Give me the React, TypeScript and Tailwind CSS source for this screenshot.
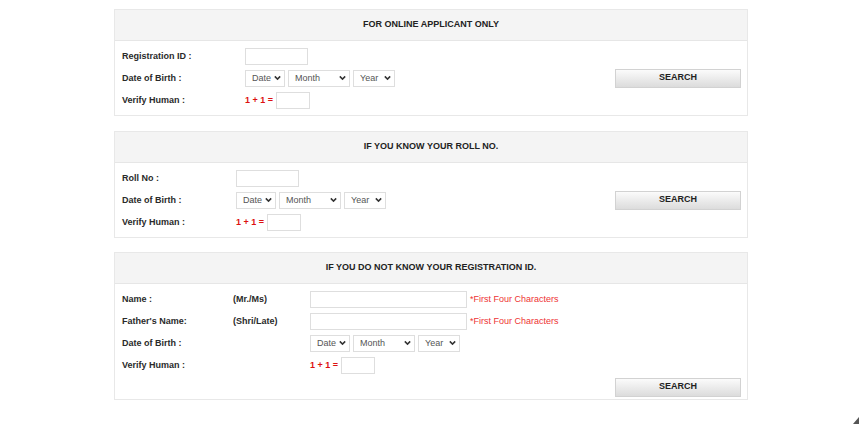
import React from 'react';

const font = { fontFamily: '"Liberation Sans", Arial, sans-serif' };

function Chevron() {
  return (
    <svg width="7" height="5" viewBox="0 0 7 5" className="pointer-events-none absolute right-[4px] top-1/2 -translate-y-1/2">
      <path d="M0.8 0.9 L3.5 3.6 L6.2 0.9" fill="none" stroke="#333" strokeWidth="1.5" />
    </svg>
  );
}

function Select({ label, width }: { label: string; width: string }) {
  return (
    <div className={`relative h-[17px] ${width}`}>
      <select
        defaultValue=""
        className="block h-full w-full appearance-none border border-[#dedede] bg-white pl-[6px] pr-[12px] text-[9px] leading-none text-[#555] outline-none"
        style={font}
      >
        <option value="">{label}</option>
      </select>
      <Chevron />
    </div>
  );
}

function DobSelects() {
  return (
    <div className="flex items-center gap-[3px]">
      <Select label="Date" width="w-[40px]" />
      <Select label="Month" width="w-[62px]" />
      <Select label="Year" width="w-[42px]" />
    </div>
  );
}

function TextBox({ width }: { width: string }) {
  return <input type="text" className={`block h-[17px] ${width} border border-[#dedede] bg-white outline-none`} />;
}

function Captcha() {
  return (
    <div className="flex items-center gap-[3px]">
      <span className="pt-[1px] text-[9px] font-bold text-[#d11]">1 + 1 =</span>
      <TextBox width="w-[34px]" />
    </div>
  );
}

function SearchButton() {
  return (
    <button
      type="button"
      className="block h-[19px] w-[126px] border border-[#d2d2d2] bg-gradient-to-b from-[#fbfbfb] to-[#dcdcdc] text-[9px] font-bold text-[#222]"
      style={font}
    >
      SEARCH
    </button>
  );
}

function Panel({ title, className, children }: { title: string; className?: string; children: React.ReactNode }) {
  return (
    <div className={`border border-[#e8e8e8] bg-white ${className ?? ''}`}>
      <div className="flex h-[31px] items-center justify-center border-b border-[#e6e6e6] bg-[#f4f4f4] text-[9px] font-bold text-[#222]">
        {title}
      </div>
      {children}
    </div>
  );
}

function Row({ label, labelWidth, children }: { label: string; labelWidth: string; children: React.ReactNode }) {
  return (
    <div className="flex h-[22px] items-center">
      <div className={`${labelWidth} pt-[2px] text-[9px] font-bold text-[#2a2a2a]`}>{label}</div>
      {children}
    </div>
  );
}

export default function App() {
  return (
    <div className="relative h-[430px] w-full bg-white" style={font}>
      <div className="ml-[114px] flex w-[634px] flex-col pt-[9px]">
        <Panel title="FOR ONLINE APPLICANT ONLY">
          <div className="flex items-center pl-[7px] pr-[6px] pt-[4px] pb-[4px]">
            <div className="flex-1">
              <Row label="Registration ID :" labelWidth="w-[123px]">
                <TextBox width="w-[63px]" />
              </Row>
              <Row label="Date of Birth :" labelWidth="w-[123px]">
                <DobSelects />
              </Row>
              <Row label="Verify Human :" labelWidth="w-[123px]">
                <Captcha />
              </Row>
            </div>
            <SearchButton />
          </div>
        </Panel>

        <Panel title="IF YOU KNOW YOUR ROLL NO." className="mt-[15px]">
          <div className="flex items-center pl-[7px] pr-[6px] pt-[4px] pb-[4px]">
            <div className="flex-1">
              <Row label="Roll No :" labelWidth="w-[114px]">
                <TextBox width="w-[63px]" />
              </Row>
              <Row label="Date of Birth :" labelWidth="w-[114px]">
                <DobSelects />
              </Row>
              <Row label="Verify Human :" labelWidth="w-[114px]">
                <Captcha />
              </Row>
            </div>
            <SearchButton />
          </div>
        </Panel>

        <Panel title="IF YOU DO NOT KNOW YOUR REGISTRATION ID." className="mt-[14px]">
          <div className="pl-[7px] pr-[6px] pt-[4px] pb-[1px]">
            <Row label="Name :" labelWidth="w-[111px]">
              <div className="w-[77px] pt-[2px] text-[9px] font-bold text-[#2a2a2a]">(Mr./Ms)</div>
              <TextBox width="w-[157px]" />
              <span className="ml-[3px] pt-[2px] text-[9px] text-[#e33]">*First Four Characters</span>
            </Row>
            <Row label="Father's Name:" labelWidth="w-[111px]">
              <div className="w-[77px] pt-[2px] text-[9px] font-bold text-[#2a2a2a]">(Shri/Late)</div>
              <TextBox width="w-[157px]" />
              <span className="ml-[3px] pt-[2px] text-[9px] text-[#e33]">*First Four Characters</span>
            </Row>
            <Row label="Date of Birth :" labelWidth="w-[188px]">
              <DobSelects />
            </Row>
            <Row label="Verify Human :" labelWidth="w-[188px]">
              <Captcha />
            </Row>
            <div className="flex h-[22px] items-center justify-end">
              <SearchButton />
            </div>
          </div>
        </Panel>
      </div>
      <svg width="6" height="7" viewBox="0 0 6 7" className="absolute bottom-[6px] right-[1px]">
        <polygon points="6,0 6,7 0,7" fill="#555" />
      </svg>
    </div>
  );
}
